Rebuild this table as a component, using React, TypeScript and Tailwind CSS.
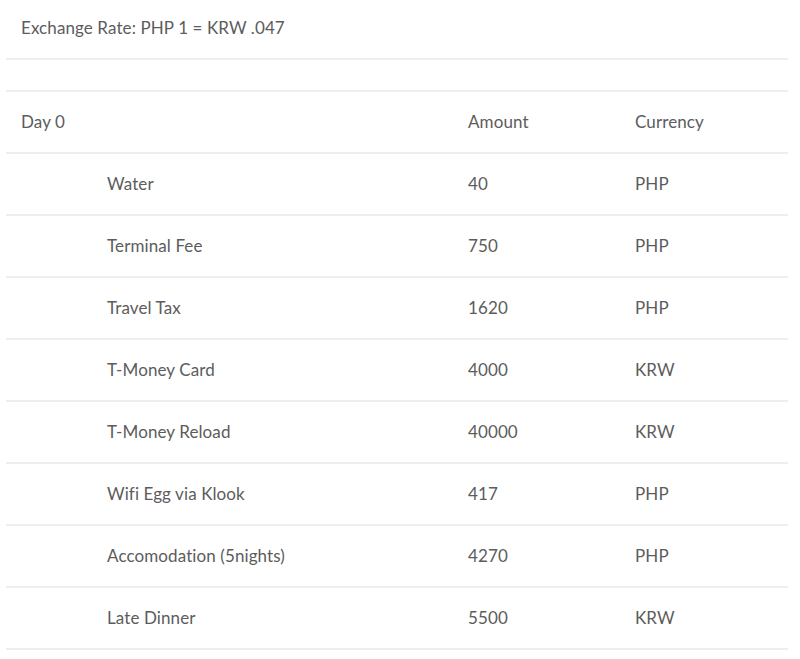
import React from "react";

const items = [
  { name: "Water", amount: "40", currency: "PHP" },
  { name: "Terminal Fee", amount: "750", currency: "PHP" },
  { name: "Travel Tax", amount: "1620", currency: "PHP" },
  { name: "T-Money Card", amount: "4000", currency: "KRW" },
  { name: "T-Money Reload", amount: "40000", currency: "KRW" },
  { name: "Wifi Egg via Klook", amount: "417", currency: "PHP" },
  { name: "Accomodation (5nights)", amount: "4270", currency: "PHP" },
  { name: "Late Dinner", amount: "5500", currency: "KRW" },
];

const App = () => {
  return (
    <div className="bg-white w-[800px] h-[659px] overflow-hidden text-[17px] tracking-[0.1px] text-[#5c5c5c] font-['Lato',sans-serif]">
      <div className="ml-[6px] w-[782px]">
        <div className="h-[58px] pl-[15px] flex items-center pb-[2px]">
          Exchange Rate: PHP 1 = KRW .047
        </div>
        <div className="h-[32px] border-t-2 border-[#eeeeee]" />
        <div className="h-[62px] border-t-2 border-[#eeeeee] flex items-center pl-[15px]">
          <div className="w-[447px]">Day 0</div>
          <div className="w-[167px]">Amount</div>
          <div className="flex-1">Currency</div>
        </div>
        {items.map((item) => (
          <div
            key={item.name}
            className="h-[62px] border-t-2 border-[#eeeeee] flex items-center pl-[15px]"
          >
            <div className="w-[447px] pl-[86px]">{item.name}</div>
            <div className="w-[167px]">{item.amount}</div>
            <div className="flex-1">{item.currency}</div>
          </div>
        ))}
        <div className="border-t-2 border-[#eeeeee]" />
      </div>
    </div>
  );
};

export default App;
